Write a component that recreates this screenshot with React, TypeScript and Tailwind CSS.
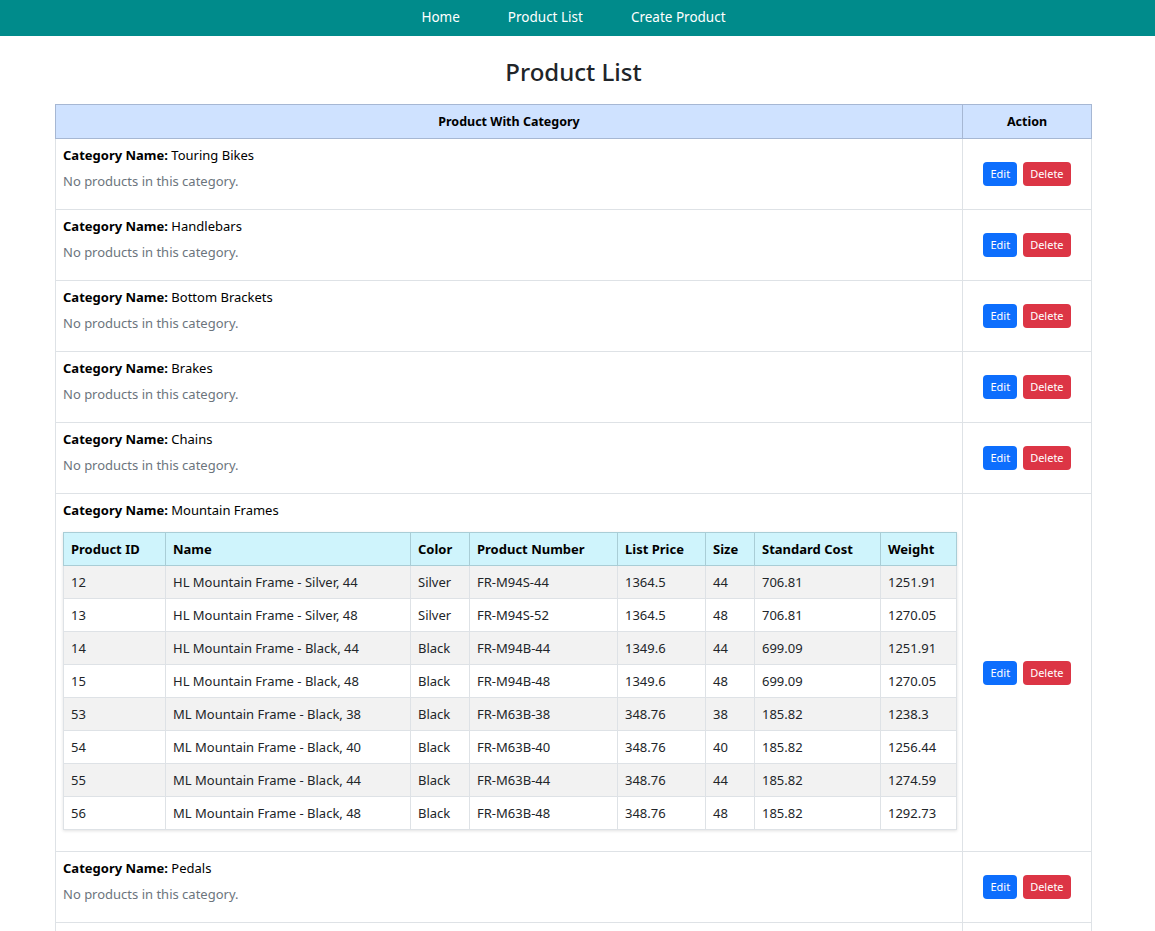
import React from "react";

type Product = {
  id: number;
  name: string;
  color: string;
  number: string;
  price: string;
  size: string;
  cost: string;
  weight: string;
};

const mountain: Product[] = [
  { id: 12, name: "HL Mountain Frame - Silver, 44", color: "Silver", number: "FR-M94S-44", price: "1364.5", size: "44", cost: "706.81", weight: "1251.91" },
  { id: 13, name: "HL Mountain Frame - Silver, 48", color: "Silver", number: "FR-M94S-52", price: "1364.5", size: "48", cost: "706.81", weight: "1270.05" },
  { id: 14, name: "HL Mountain Frame - Black, 44", color: "Black", number: "FR-M94B-44", price: "1349.6", size: "44", cost: "699.09", weight: "1251.91" },
  { id: 15, name: "HL Mountain Frame - Black, 48", color: "Black", number: "FR-M94B-48", price: "1349.6", size: "48", cost: "699.09", weight: "1270.05" },
  { id: 53, name: "ML Mountain Frame - Black, 38", color: "Black", number: "FR-M63B-38", price: "348.76", size: "38", cost: "185.82", weight: "1238.3" },
  { id: 54, name: "ML Mountain Frame - Black, 40", color: "Black", number: "FR-M63B-40", price: "348.76", size: "40", cost: "185.82", weight: "1256.44" },
  { id: 55, name: "ML Mountain Frame - Black, 44", color: "Black", number: "FR-M63B-44", price: "348.76", size: "44", cost: "185.82", weight: "1274.59" },
  { id: 56, name: "ML Mountain Frame - Black, 48", color: "Black", number: "FR-M63B-48", price: "348.76", size: "48", cost: "185.82", weight: "1292.73" },
];

const categories: { name: string; products: Product[] }[] = [
  { name: "Touring Bikes", products: [] },
  { name: "Handlebars", products: [] },
  { name: "Bottom Brackets", products: [] },
  { name: "Brakes", products: [] },
  { name: "Chains", products: [] },
  { name: "Mountain Frames", products: mountain },
  { name: "Pedals", products: [] },
  { name: "Road Frames", products: [] },
  { name: "Saddles", products: [] },
];

const innerCols = [102, 245, 59, 148, 88, 49, 126, 76];
const innerHeads = ["Product ID", "Name", "Color", "Product Number", "List Price", "Size", "Standard Cost", "Weight"];

function Buttons() {
  return (
    <div className="flex items-center justify-center gap-[6px]">
      <button className="h-[24px] rounded-[4px] bg-[#0d6efd] px-[7px] text-[11px] leading-[24px] text-white">Edit</button>
      <button className="h-[24px] rounded-[4px] bg-[#dc3545] px-[7px] text-[11px] leading-[24px] text-white">Delete</button>
    </div>
  );
}

function ProductTable({ products }: { products: Product[] }) {
  return (
    <table className="mt-[11px] mb-[4px] w-[893px] table-fixed border-collapse shadow-[0_1px_3px_rgba(0,0,0,0.12)]">
      <colgroup>
        {innerCols.map((w, i) => (
          <col key={i} style={{ width: w }} />
        ))}
      </colgroup>
      <thead>
        <tr className="bg-[#cff4fc]">
          {innerHeads.map((h) => (
            <th key={h} className="border border-[#a9cdd6] px-[7px] py-[6px] text-left text-[13px] font-bold leading-[20px] text-black">
              {h}
            </th>
          ))}
        </tr>
      </thead>
      <tbody>
        {products.map((p, i) => (
          <tr key={p.id} className={i % 2 === 0 ? "bg-[#f2f2f2]" : "bg-white"}>
            {[String(p.id), p.name, p.color, p.number, p.price, p.size, p.cost, p.weight].map((v, j) => (
              <td key={j} className="border border-[#dee2e6] px-[7px] py-[6px] text-[13px] leading-[20px] text-[#212529]">
                {v}
              </td>
            ))}
          </tr>
        ))}
      </tbody>
    </table>
  );
}

export default function App() {
  return (
    <div className="min-h-screen bg-white text-[#212529]" style={{ fontFamily: '"Noto Sans", "Open Sans", sans-serif' }}>
      <nav className="flex h-[36px] items-center justify-center bg-[#008b8b] pb-[2px] pr-[8px]">
        <a className="px-[24px] text-[13.5px] text-white">Home</a>
        <a className="px-[24px] text-[13.5px] text-white">Product List</a>
        <a className="px-[24px] text-[13.5px] text-white">Create Product</a>
      </nav>
      <h1 className="mt-[20px] mb-[17px] pr-[8px] text-center text-[24px] font-medium leading-[31px] text-[#212529]">Product List</h1>
      <table className="ml-[55px] w-[1036px] table-fixed border-collapse">
        <colgroup>
          <col style={{ width: 907 }} />
          <col style={{ width: 129 }} />
        </colgroup>
        <thead>
          <tr className="bg-[#cfe2ff]">
            <th className="h-[34px] border border-[#a6b7d3] px-[7px] py-[6px] text-center text-[12.5px] font-bold leading-[20px] text-black">Product With Category</th>
            <th className="h-[34px] border border-[#a6b7d3] px-[7px] py-[6px] text-center text-[12.5px] font-bold leading-[20px] text-black">Action</th>
          </tr>
        </thead>
        <tbody>
          {categories.map((c) => (
            <tr key={c.name}>
              <td className="border border-[#dee2e6] px-[7px] pt-[6px] pb-[17px] align-top text-[13px] leading-[21px]">
                <div className="text-black">
                  <span className="font-bold">Category Name:</span> {c.name}
                </div>
                {c.products.length === 0 ? (
                  <p className="mt-[5px] text-[#6c757d]">No products in this category.</p>
                ) : (
                  <ProductTable products={c.products} />
                )}
              </td>
              <td className="border border-[#dee2e6] px-[7px] align-middle">
                <Buttons />
              </td>
            </tr>
          ))}
        </tbody>
      </table>
    </div>
  );
}
